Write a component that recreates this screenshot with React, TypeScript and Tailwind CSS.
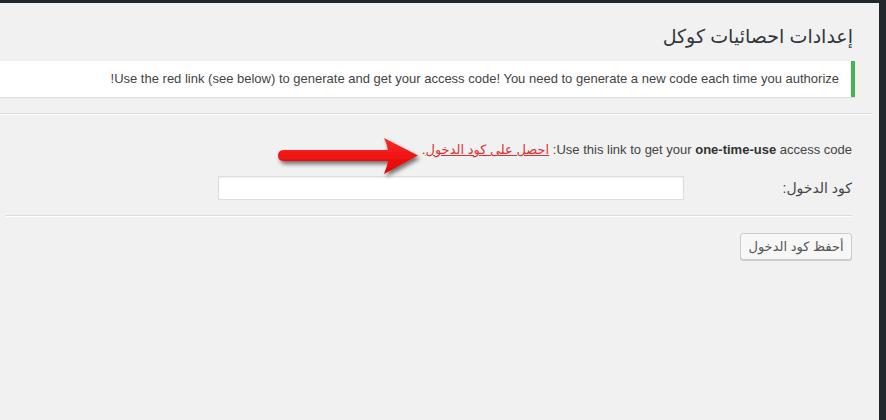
export default function App() {
  return (
    <div
      className="flex h-[420px] w-[886px] flex-col overflow-hidden bg-[#23282d] pt-[3px] pr-[7px]"
      style={{ fontFamily: '"Liberation Sans", "DejaVu Sans", sans-serif' }}
    >
      <div className="relative flex flex-1 flex-col bg-[#f1f1f1] pr-[6px]" dir="rtl">
        <div className="flex flex-col bg-[#f1f1f1] pr-[18px]">
          {/* Title */}
          <h1 className="pt-[19px] pr-[2px] text-[19px] leading-[29px] font-normal text-[#32373c]">
            إعدادات احصائيات كوكل
          </h1>

          {/* Notice */}
          <div className="mt-[10px] flex h-[36px] items-center border-r-4 border-[#46b450] bg-white px-[12px] shadow-[0_1px_1px_rgba(0,0,0,0.08)]">
            <p className="text-[13px] text-[#444]">
              Use the red link (see below) to generate and get your access code! You need to generate a new code each time you authorize!
            </p>
          </div>
        </div>

        {/* Separator */}
        <div className="mt-[16px] border-t border-[#dcdcdc] border-b border-b-white" />

        <div className="flex flex-col pr-[21px]">
          <p className="mt-[26px] text-[13px] leading-[18px] text-[#444]">
            Use this link to get your <b className="text-[#333]">one-time-use</b> access code:{" "}
            <a href="#" className="text-[#dd3333] underline">
              احصل على كود الدخول
            </a>
            .
          </p>

          <div className="mt-[17px] flex items-center">
            <label className="w-[168px] text-[14px] text-[#444]">كود الدخول:</label>
            <input
              type="text"
              className="h-[24px] w-[466px] border border-[#ddd] bg-white shadow-[inset_0_1px_2px_rgba(0,0,0,0.07)] outline-none"
            />
          </div>

          <div className="mt-[15px] ml-[6px] border-t border-[#dcdcdc] border-b border-b-white" />

          <div className="mt-[16px] flex">
            <button className="h-[27px] w-[112px] rounded-[3px] border border-[#ccc] bg-[#f7f7f7] text-[13px] text-[#555] shadow-[0_1px_0_#ccc]">
              أحفظ كود الدخول
            </button>
          </div>
        </div>

        {/* Red annotation arrow */}
        <svg
          className="absolute top-[131px] left-[271px]"
          width="158"
          height="46"
          viewBox="0 0 158 46"
        >
          <defs>
            <filter id="sh" x="-10%" y="-20%" width="130%" height="160%">
              <feDropShadow dx="2" dy="3" stdDeviation="2" floodColor="#000" floodOpacity="0.55" />
            </filter>
            <linearGradient id="rg" x1="0" y1="0" x2="0" y2="1">
              <stop offset="0" stopColor="#ff2a2a" />
              <stop offset="1" stopColor="#e00000" />
            </linearGradient>
          </defs>
          <path
            d="M13 16 L117 16 Q116 10 113 4 L147 21.5 L113 40 Q116 33 117 27 L13 27 Q7 27 7 21.5 Q7 16 13 16 Z"
            fill="url(#rg)"
            filter="url(#sh)"
          />
        </svg>
      </div>
    </div>
  );
}
